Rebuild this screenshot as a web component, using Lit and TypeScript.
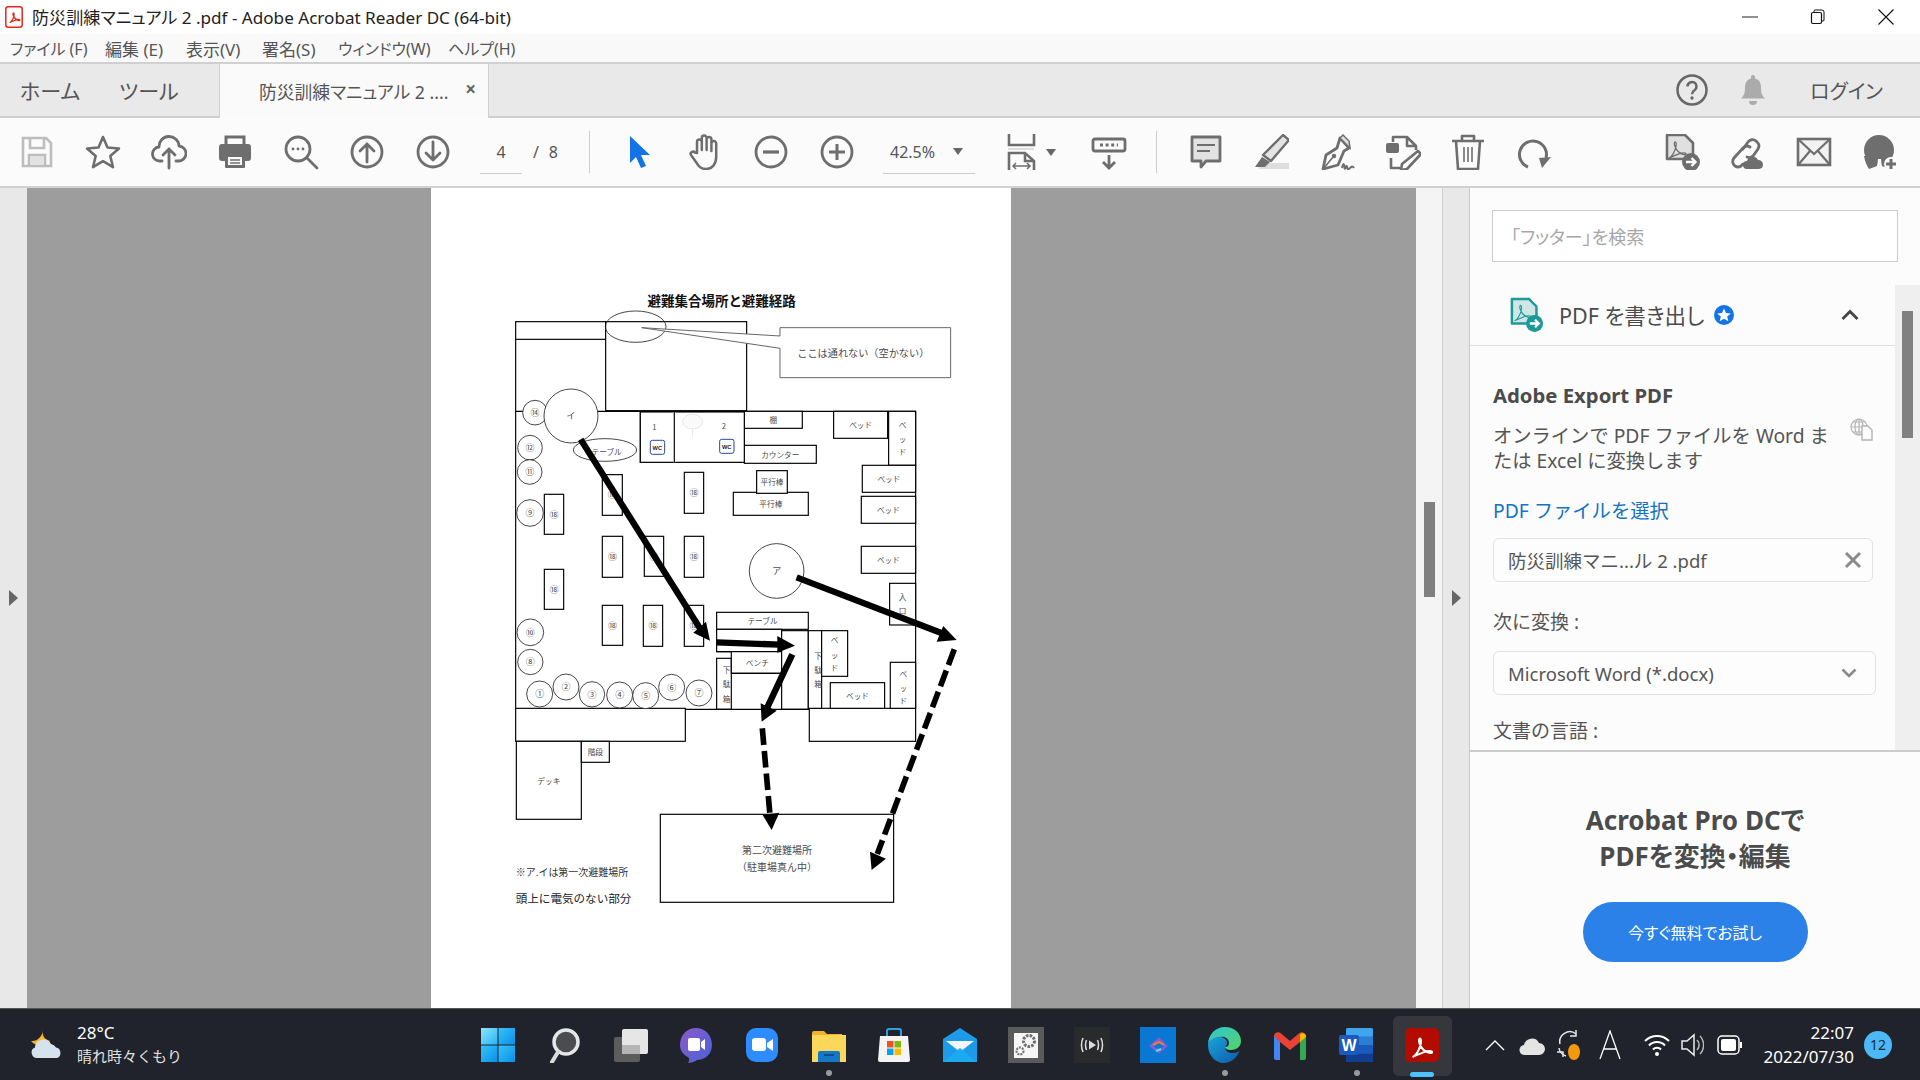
import { LitElement, html, css, svg, nothing } from "lit";
import { customElement } from "lit/decorators.js";

const G = "#6e6e6e";
const swirl = (c: string, w = 1.6) => svg`<path fill="none" stroke=${c} stroke-width=${w} stroke-linejoin="round" d="M5 27c3-1 7-8 8-14 .4-3 0-5-1-5s-1.6 3 0 6c2 5 6 8 10 9 2 .4 3.4-.3 2.6-1.3-1-1-5-.6-9 .8-5 2-9.6 4-10.6 4.500z"/>`;

const icons: Record<string, unknown> = {
  save: svg`<g fill="none" stroke="#bdbdbd" stroke-width="2.6"><path d="M4 4h23l5 5v23H4z"/><path d="M11 4v10h14V4M10 32V21h16v11"/></g><rect x="11" y="22" width="14" height="9" fill="#e2e2e2"/>`,
  star: svg`<polygon points="18,3 22.500,13.500 34,14.500 25.300,22 28,33.200 18,27.200 8,33.200 10.700,22 2,14.500 13.500,13.500" fill="none" stroke=${G} stroke-width="2.6" stroke-linejoin="round"/>`,
  upload: svg`<g fill="none" stroke=${G} stroke-width="2.8" stroke-linecap="round" stroke-linejoin="round"><path d="M11 27H9a7 7 0 0 1-1-14 10 10 0 0 1 20-1 7.500 7.500 0 0 1-1 15h-2"/><path d="M18 34V15M12 21l6-6 6 6"/></g>`,
  print: svg`<path d="M9 10V3h18v7" fill="none" stroke=${G} stroke-width="3"/><rect x="2" y="10" width="32" height="17" rx="3" fill=${G}/><path d="M8 20h20v13a1 1 0 0 1-1 1H9a1 1 0 0 1-1-1z" fill=${G}/><rect x="11" y="23" width="14" height="8" fill="#fafafa"/><path d="M13 26h10M13 29h10" stroke=${G} stroke-width="1.400"/>`,
  find: svg`<g fill="none" stroke=${G} stroke-width="2.8" stroke-linecap="round"><circle cx="15" cy="15" r="12"/><path d="M24 24l10 10"/></g><g fill=${G}><circle cx="10" cy="15" r="1.400"/><circle cx="15" cy="15" r="1.400"/><circle cx="20" cy="15" r="1.400"/></g>`,
  up: svg`<g fill="none" stroke=${G} stroke-width="2.800" stroke-linecap="round" stroke-linejoin="round"><circle cx="18" cy="18" r="15"/><path d="M18 28V10M11 17l7-7 7 7"/></g>`,
  down: svg`<g fill="none" stroke=${G} stroke-width="2.800" stroke-linecap="round" stroke-linejoin="round"><circle cx="18" cy="18" r="15"/><path d="M18 8v18M11 19l7 7 7-7"/></g>`,
  cursor: svg`<path d="M9 2v27l6-6 5 11 5-2-5-11h9z" fill="#1473e6"/>`,
  hand: svg`<path d="M10 19V8a2.400 2.400 0 0 1 4.800 0v8V4a2.400 2.400 0 0 1 4.800 0v12V5.500a2.400 2.400 0 0 1 4.800 0V17V9.500a2.400 2.400 0 0 1 4.800 0V23c0 7-4 12-10 12-4.500 0-7.500-2-9.500-6L4 21c-1.500-2.500 2-4.500 4-2.500z" fill="none" stroke=${G} stroke-width="2.500" stroke-linejoin="round"/>`,
  minus: svg`<g fill="none" stroke=${G} stroke-width="2.800"><circle cx="18" cy="18" r="15"/><path d="M10 18h16" stroke-width="3.200"/></g>`,
  plus: svg`<g fill="none" stroke=${G} stroke-width="2.800"><circle cx="18" cy="18" r="15"/><path d="M10 18h16M18 10v16" stroke-width="3"/></g>`,
  fit: svg`<g fill="none" stroke=${G} stroke-width="2.600"><path d="M5 0v11h25V0"/><path d="M5 36V19h16l9 8v9"/><path d="M21 19v8h9"/><path d="M9 32h17M12 29l-3 3 3 3M23 29l3 3-3 3" stroke-width="1.500"/></g><rect x="4" y="14" width="26" height="2" fill="#ddd"/>`,
  measure: svg`<g fill="none" stroke=${G}><rect x="2" y="5" width="32" height="12" rx="2" stroke-width="2.800"/><path d="M18 21v13M12 28l6 6 6-6" stroke-width="2.800"/><path d="M9 11h18" stroke-width="3" stroke-dasharray="3 2.600"/></g>`,
  comment: svg`<path d="M4 3h28v24H18l-5 6v-6H4z" fill="#e2e2e2" stroke=${G} stroke-width="2.800" stroke-linejoin="round"/><path d="M9 11h18M9 17h13" stroke=${G} stroke-width="1.800"/>`,
  highlight: svg`<rect x="6" y="29" width="30" height="6" fill="#dedede"/><path d="M30 1l6 5-18 21-8-6z" fill="#e4e4e4" stroke=${G} stroke-width="2.400" stroke-linejoin="round"/><path d="M9 23l-7 10h10l5-5z" fill=${G}/>`,
  sign: svg`<path d="M21 4l9 10-5 3-6 14-15 4 3-14 11-7z" fill="none" stroke=${G} stroke-width="2.800" stroke-linejoin="round"/><path d="M21 4l3-3 6 6 1 7z" fill="#e0e0e0" stroke=${G} stroke-width="1.500"/><path d="M5 34l9-11" stroke=${G} stroke-width="1.600"/><circle cx="15" cy="22" r="2.200" fill=${G}/><path d="M23 34c1-5 2-5 2.500-.5s1.500-4.500 2.500-.5 1.500 2 3 1 2-3 4 0" fill="none" stroke=${G} stroke-width="2"/>`,
  edit: svg`<g fill="none" stroke=${G} stroke-width="2.600" stroke-linejoin="round"><path d="M8 8V3h14l9 9v4M22 3v9h9M6 24v10h9"/><path d="M33 17l3 3-14 15-6 1 1-6z"/></g><rect x="1" y="9" width="13" height="10" rx="2" fill=${G}/>`,
  trash: svg`<g fill="none" stroke=${G} stroke-width="2.600" stroke-linejoin="round"><path d="M2 7h32M12 7V2h12v5M6 7l2 28h20l2-28"/><path d="M14 13v15M18 13v15M22 13v15" stroke-width="1.600"/></g>`,
  rotate: svg`<path d="M12 33A13.500 13.500 0 1 1 30 24" fill="none" stroke=${G} stroke-width="3"/><polygon points="23,24 35,23 26,34" fill=${G}/>`,
  exportDoc: svg`<path d="M3 1h18l8 8v16H3z" fill="#e0e0e0" stroke=${G} stroke-width="2.600" stroke-linejoin="round"/><g transform="translate(1 1) scale(.85)">${swirl(G, 1.5)}</g><circle cx="27" cy="28" r="9" fill=${G}/><path d="M22 28h9M27.500 24l4 4-4 4" fill="none" stroke="#fff" stroke-width="2.400"/>`,
  link: svg`<g transform="translate(-2 0)"><g fill="none" stroke=${G} stroke-width="2.800" stroke-linecap="round"><path d="M15 15l5-7a5.500 5.500 0 0 1 8-1l1 1a5.500 5.500 0 0 1 1 7l-5 7a5.500 5.500 0 0 1-6 1"/><path d="M22 13a5.500 5.500 0 0 0-7 1l-9 10a5.500 5.500 0 0 0 1 8 5.500 5.500 0 0 0 7-1l1-1"/></g><path d="M19 35a4 4 0 0 1 0-8 6 6 0 0 1 11-1 4.500 4.500 0 0 1 5 4.500A4.500 4.500 0 0 1 31 35z" fill=${G}/></g>`,
  mail: svg`<rect x="2" y="5" width="32" height="26" fill="#f2f2f2" stroke=${G} stroke-width="2.600"/><path d="M2 5l16 15L34 5M2 31l12-14M34 31L22 17" fill="none" stroke=${G} stroke-width="2.200"/>`,
  user: svg`<circle cx="17" cy="16" r="15" fill=${G}/><path d="M2 22c1 6 3 10 5 13l8-3 1-6h3l1 6 7 3 3-13z" fill=${G}/><path d="M15 34l1-9h3l1 9z" fill="#fbfbfb"/><circle cx="29" cy="30" r="7" fill="#fbfbfb"/><path d="M29 25v10M24 30h10" stroke=${G} stroke-width="3"/>`,
};

const tool = (name: string, size = 36) =>
  html`<svg class="ico" width=${size} height=${size} viewBox="0 0 36 36">${icons[name]}</svg>`;

/* ---- floor plan: coordinates are in a 3x grid laid over the page ---- */
type R = [number, number, number, number, string?];
const rectsA: R[] = [
  [77, 125, 347, 178], [347, 125, 770, 392], [451, 396, 553, 547], [553, 396, 763, 547],
  [763, 394, 937, 445, "棚"], [763, 496, 979, 550, "カウンター"], [1031, 394, 1193, 475, "ベッド"],
  [1196, 394, 1277, 556], [1117, 556, 1277, 637, "ベッド"], [1114, 649, 1277, 730, "ベッド"],
  [1114, 799, 1277, 880, "ベッド"], [730, 637, 955, 706, "平行棒"], [800, 572, 892, 640, "平行棒"],
  [163, 643, 221, 763, "⑱"], [337, 584, 397, 706, "⑱"], [583, 577, 641, 700, "⑱"],
  [337, 769, 398, 892, "⑱"], [463, 769, 521, 889, "⑱"], [583, 769, 641, 892, "⑱"],
];
const rectsB: R[] = [
  [163, -2, 221, 118, "⑱"], [337, 106, 398, 226, "⑱"], [460, 106, 518, 229, "⑱"], [583, 106, 641, 229, "⑱"],
  [77, 415, 586, 514], [958, 415, 1277, 514], [79, 514, 274, 748, "デッキ"], [274, 514, 358, 577, "階段"],
  [680, 127, 955, 178, "テーブル"], [680, 178, 875, 245], [680, 265, 724, 418], [724, 245, 880, 310, "ベンチ"],
  [875, 182, 955, 418], [955, 182, 995, 415], [995, 182, 1073, 319], [1021, 338, 1184, 415, "ベッド"],
  [1199, 40, 1277, 165], [1201, 277, 1277, 415], [511, 733, 1211, 997],
];
const circlesA: [number, number, number, string][] = [
  [135, 398, 37, "⑭"], [120, 503, 37, "⑫"], [119, 576, 37, "⑪"], [120, 699, 40, "⑨"],
  [243, 408, 81, "イ"], [860, 873, 82, "ア"],
];
const circlesB: [number, number, number, string][] = [
  [121, 187, 40, "⑩"], [121, 276, 38, "⑧"], [149, 372, 39, "①"], [228, 351, 39, "②"], [306, 373, 38, "③"],
  [389, 375, 39, "④"], [467, 377, 39, "⑤"], [545, 352, 39, "⑥"], [627, 369, 39, "⑦"],
];
const vertical: [number, number, string][] = [
  [1238, 432 - 870, "ベ"], [1238, 476 - 870, "ッ"], [1238, 515 - 870, "ド"],
  [710, 298, "下"], [710, 342, "駄"], [710, 385, "箱"], [984, 258, "下"], [984, 300, "駄"], [984, 342, "箱"],
  [1034, 208, "ベ"], [1034, 253, "ッ"], [1034, 293, "ド"], [1238, 80, "入"], [1238, 122, "口"],
  [1240, 310, "ベ"], [1240, 352, "ッ"], [1240, 392, "ド"], [493, 440 - 870, "1"], [702, 437 - 870, "2"],
];
const rectSvg = (r: R) => svg`<rect class="wall" x=${r[0]} y=${r[1]} width=${r[2] - r[0]} height=${r[3] - r[1]}/>${r[4] ? svg`<text class="lb ${r[4] === "⑱" ? "num" : ""}" x=${(r[0] + r[2]) / 2} y=${(r[1] + r[3]) / 2}>${r[4]}</text>` : nothing}`;
const circleSvg = (c: [number, number, number, string]) => svg`<circle class="round" cx=${c[0]} cy=${c[1]} r=${c[2]}/><text class="lb num" x=${c[0]} y=${c[1]}>${c[3]}</text>`;

const plan = () => html`
<svg class="plan" width="580" height="820" viewBox="431 188 580 820">
  <g transform="translate(490 280) scale(.3333)">
    <text class="ttl" x="695" y="60">避難集合場所と避難経路</text>
    <path class="line" d="M77 178V1285M77 394H1277V1285"/>
    ${rectsA.map(rectSvg)}
    <rect class="wall" x="451" y="396" width="312" height="151"/>
    <path class="blank" d="M665 404V530M553 396V547"/>
    <path class="line" d="M553 396V547"/>
    <ellipse class="round nofill" cx="437" cy="140" rx="91" ry="47"/>
    <path class="callout" d="M870 143H1382V293H870V205L455 143 870 168z"/>
    <text class="lb big" x="1120" y="217">ここは通れない（空かない）</text>
    <ellipse class="round" cx="345" cy="510" rx="95" ry="34"/>
    <text class="lb" x="350" y="516">テーブル</text>
    <g class="sink"><ellipse cx="608" cy="425" rx="30" ry="22"/><path d="M608 447V470"/></g>
    <rect class="wc" x="481" y="481" width="43" height="42" rx="6"/><text class="wct" x="502" y="503">WC</text>
    <rect class="wc" x="689" y="478" width="43" height="42" rx="6"/><text class="wct" x="710" y="500">WC</text>
    ${circlesA.map(circleSvg)}
  </g>
  <g transform="translate(490 570) scale(.3333)">
    ${rectsB.map(rectSvg)}
    <path class="line" d="M586 418H958M680 245H724M724 310H875"/>
    ${circlesB.map(circleSvg)}
    ${vertical.map((v) => svg`<text class="lb" x=${v[0]} y=${v[1]}>${v[2]}</text>`)}
    <text class="lb mid" x="861" y="838">第二次避難場所</text>
    <text class="lb mid" x="861" y="891">（駐車場真ん中）</text>
    <text class="note" x="77" y="904">※ア.イは第一次避難場所</text>
    <text class="note strong" x="77" y="983">頭上に電気のない部分</text>
    <g class="arrow">
      <path d="M272 -392L632 178"/><polygon points="648,155 660,212 610,188"/>
      <path d="M680 217L870 224"/><polygon points="862,198 915,227 862,248"/>
      <path d="M907 253L832 412"/><polygon points="812,400 815,455 860,422"/>
      <path d="M920 22L1362 192"/><polygon points="1360,168 1400,210 1340,215"/>
      <path class="dash" d="M817 475L840 735"/><polygon points="818,735 868,728 845,780"/>
      <path class="dash" d="M1393 238L1162 852"/><polygon points="1140,845 1188,866 1145,900"/>
    </g>
  </g>
</svg>`;

/* ---- taskbar glyphs ---- */
const task = [
  svg`<defs><linearGradient id="w1" x1="0" y1="0" x2="1" y2="1"><stop offset="0" stop-color="#8fe3fb"/><stop offset="1" stop-color="#25b5f5"/></linearGradient><linearGradient id="w2" x1="0" y1="0" x2="1" y2="1"><stop offset="0" stop-color="#35c3fa"/><stop offset="1" stop-color="#0a8fe8"/></linearGradient></defs><rect x="1" y="1" width="16.500" height="16.500" fill="url(#w1)"/><rect x="18.500" y="1" width="16.500" height="16.500" fill="url(#w2)"/><rect x="1" y="18.500" width="16.500" height="16.500" fill="url(#w2)"/><rect x="18.500" y="18.500" width="16.500" height="16.500" fill="url(#w2)"/>`,
  svg`<circle cx="20" cy="15" r="12" fill="#4a4c50" stroke="#e4e6e8" stroke-width="3.500"/><path d="M12 25L6 35" stroke="#d8dadc" stroke-width="4" stroke-linecap="round"/>`,
  svg`<rect x="2" y="10" width="26" height="25" rx="2" fill="#5c5c5c"/><rect x="10" y="2" width="26" height="25" rx="2" fill="#e6e6e6"/><rect x="10" y="18" width="18" height="9" fill="#b5b5b5"/>`,
  svg`<defs><linearGradient id="c1" x1="0" y1="0" x2="1" y2="1"><stop offset="0" stop-color="#8a5bc9"/><stop offset="1" stop-color="#4a62d8"/></linearGradient></defs><path d="M18 1c9 0 16 7 16 17s-8 15-15 15c-2 2-7 3-9 3 1-1 1.500-3 1-5C6 28 2 24 2 18 2 8 9 1 18 1z" fill="url(#c1)"/><rect x="10" y="11" width="12" height="13" rx="2" fill="#fff"/><path d="M23 15l4-3v11l-4-3z" fill="#fff"/>`,
  svg`<rect x="2" y="1" width="32" height="34" rx="10" fill="#2d8cff"/><rect x="8" y="11" width="14" height="13" rx="3" fill="#fff"/><path d="M23 16l6-4v12l-6-4z" fill="#fff"/>`,
  svg`<path d="M2 6a2 2 0 0 1 2-2h10l3 3h15v28H2z" fill="#f3b12c"/><rect x="2" y="8" width="34" height="27" fill="#fbd75b"/><path d="M8 35V26a2 2 0 0 1 2-2h18a2 2 0 0 1 2 2v9z" fill="#1478c8"/><rect x="14" y="27" width="10" height="2" fill="#0c4f8e"/>`,
  svg`<path d="M4 9h28l2 24a2 2 0 0 1-2 2H4a2 2 0 0 1-2-2z" fill="#f4f4f4"/><path d="M11 9V4a2 2 0 0 1 2-2h10a2 2 0 0 1 2 2v5" fill="none" stroke="#2f9fe8" stroke-width="2"/><rect x="11" y="14" width="6.500" height="6.500" fill="#f25022"/><rect x="18.500" y="14" width="6.500" height="6.500" fill="#7fba00"/><rect x="11" y="21.500" width="6.500" height="6.500" fill="#00a4ef"/><rect x="18.500" y="21.500" width="6.500" height="6.500" fill="#ffb900"/>`,
  svg`<path d="M1 12L18 1l17 11v23H1z" fill="#1b9be8"/><path d="M4 14h28L18 25z" fill="#f2f8fd"/><path d="M1 35l17-14 17 14z" fill="#1ba9f0"/>`,
  svg`<rect x="0" y="0" width="36" height="36" fill="#5a5a5a"/><rect x="6" y="6" width="24" height="25" fill="#f6f6f6"/><circle cx="21" cy="14" r="5.500" fill="none" stroke="#6e6e6e" stroke-width="3" stroke-dasharray="2.500 1.200"/><circle cx="12" cy="24" r="3.500" fill="none" stroke="#777" stroke-width="2.200" stroke-dasharray="2 1"/>`,
  svg`<rect x="0" y="0" width="36" height="36" fill="#292a2c"/><g fill="none" stroke="#ddd" stroke-width="1.500"><path d="M9 11q-3 7 0 14M12.500 13q-2 5 0 10M27 11q3 7 0 14M23.500 13q2 5 0 10"/></g><polygon points="15,13.500 22,18 15,22.500" fill="#ddd"/>`,
  svg`<rect x="0" y="0" width="36" height="36" fill="#0a78d2"/><path d="M11 19l8-7 7 7-7 6z" fill="none" stroke="#8a5ad8" stroke-width="2.500"/><path d="M13 18l6-3 5 3" fill="none" stroke="#ef7d2f" stroke-width="2"/><path d="M16 24l5-2" stroke="#5ce0e6" stroke-width="2"/>`,
  svg`<defs><linearGradient id="e1" x1="0" y1="0" x2="1" y2="1"><stop offset="0" stop-color="#2fc6d4"/><stop offset="1" stop-color="#55d267"/></linearGradient><linearGradient id="e2" x1="0" y1="0" x2="1" y2="1"><stop offset="0" stop-color="#1aa3de"/><stop offset="1" stop-color="#0d5aa6"/></linearGradient></defs><path d="M2 18C2 8 9 0 19 0c9 0 16 6 16 14 0 6-5 9-10 9-3 0-6-1-6-3 2 0 4-1 4-4 0-4-4-7-9-6C8 11 2 14 2 18z" fill="url(#e1)"/><path d="M2 18c0-5 6-8 12-8 4 0 7 2.500 7 6 0 1-.5 3-2 4 0 5 5 6 8 6 3 0 6-1 7-3-3 8-9 13-16 13C9 36 2 28 2 18z" fill="url(#e2)"/>`,
  svg`<path d="M2 33V8l6-1v26H4a2 2 0 0 1-2-2z" fill="#4285f4"/><path d="M34 33V8l-6-1v26h4a2 2 0 0 0 2-2z" fill="#34a853"/><path d="M2 9c0-3 4-5 6.500-3L18 14l9.500-8c2.500-2 6.500 0 6.500 3L28 15l-10 8-10-8z" fill="#ea4335"/><path d="M28 7v8l6-5c0-3-3-5-6-3z" fill="#fbbc04"/>`,
  svg`<rect x="8" y="1" width="27" height="34" rx="2" fill="#2b7cd3"/><rect x="8" y="1" width="27" height="8.500" rx="2" fill="#41a5ee"/><rect x="8" y="18" width="27" height="8.500" fill="#185abd"/><path d="M8 26.500h27V33a2 2 0 0 1-2 2H10a2 2 0 0 1-2-2z" fill="#103f91"/><rect x="1" y="8" width="20" height="20" rx="2" fill="#185abd"/><text class="wordw" x="11" y="18">W</text>`,
  svg`<rect x="1" y="1" width="34" height="34" rx="5" fill="#b30b00"/><g transform="translate(4.500 4) scale(.95)">${swirl("#fff", 2.200)}</g>`,
];

@customElement("app-root")
export class AppRoot extends LitElement {
  static styles = css`
    :host {
      display: flex; flex-direction: column; width: 1920px; height: 1080px; overflow: hidden;
      font-family: "Noto Sans", "Noto Sans CJK JP", sans-serif; color: #555;
      font-feature-settings: "palt"; background: #e8e8e8;
    }
    svg { display: block; flex: none; }
    .titlebar { height: 34px; background: #fff; display: flex; align-items: center; color: #222; font-size: 17.100px; flex: none; padding-bottom: 1px; box-sizing: border-box; }
    .app-ico { margin: 0 9px 0 5px; }
    .title { flex: 1; }
    .winbtn { width: 68px; display: flex; justify-content: center; }
    .menubar { height: 30px; box-sizing: border-box; background: #f9f9f9; border-bottom: 2px solid #d0d0d0; display: flex; align-items: center; padding-left: 10px; font-size: 16px; flex: none; }
    .menubar span { flex: none; }
    .menubar .m1 { width: 95px; }
    .menubar .m2 { width: 81px; font-size: 17px; }
    .menubar .m3, .menubar .m4 { width: 76px; font-size: 17px; }
    .menubar .m5 { width: 110px; }
    .tabs { height: 54px; box-sizing: border-box; background: #e9e9e9; border-bottom: 2px solid #cfcfcf; display: flex; align-items: stretch; flex: none; font-size: 21px; }
    .tlink { display: flex; align-items: center; padding-left: 20px; width: 99px; box-sizing: border-box; }
    .tlink.second { width: 120px; }
    .tab { width: 270px; margin-bottom: -2px; background: #fafafa; border-left: 1px solid #cfcfcf; border-right: 1px solid #cfcfcf; display: flex; align-items: center; padding-left: 39px; box-sizing: border-box; font-size: 17.800px; position: relative; }
    .tab .x { position: absolute; right: 12px; font-size: 19px; font-weight: 700; color: #666; top: 12px; }
    .tabs .spacer { flex: 1; }
    .help { margin-right: 32px; align-self: center; }
    .bell { margin-right: 44px; align-self: center; }
    .login { align-self: center; margin-right: 37px; font-size: 20px; }
    .toolbar { height: 70px; background: #fbfbfb; border-bottom: 2px solid #d0d0d0; box-sizing: border-box; display: flex; align-items: center; padding-left: 4px; flex: none; }
    .tb { width: 66px; display: flex; justify-content: center; flex: none; }
    .pager { display: flex; align-items: center; width: 123px; flex: none; font-size: 16px; }
    .pageinput { margin-left: 14px; width: 42px; height: 43px; border-bottom: 1px solid #ccc; display: flex; align-items: center; justify-content: center; flex: none; }
    .slash { margin-left: 11px; letter-spacing: .5px; }
    .sep { width: 1px; height: 42px; background: #ccc; flex: none; }
    .sep.after { margin-left: 14px; }
    .pad16 { width: 16px; flex: none; }
    .tools-b .tb { width: 65.600px; }
    .tools-b { display: flex; flex: none; }
    .zoombox { width: 92px; margin-left: 13px; height: 43px; border-bottom: 1px solid #ccc; display: flex; align-items: center; flex: none; font-size: 16px; padding-left: 7px; box-sizing: border-box; }
    .zoombox span { flex: 1; }
    .caret { width: 0; height: 0; border: 5px solid transparent; border-top: 7px solid #666; border-bottom: 0; }
    .zoombox .caret { margin-right: 12px; }
    .fitbtn { width: 86px; margin-left: 29px; display: flex; align-items: center; gap: 6px; flex: none; }
    .meas { margin-left: -14px; }
    .grow { flex: 1; }
    .end { margin-right: 7px; }
    .main { flex: 1; display: flex; min-height: 0; }
    .gutter { width: 27px; background: #e8e8e8; display: flex; align-items: center; flex: none; box-sizing: border-box; justify-content: center; }
    .tri { width: 0; height: 0; border: 8px solid transparent; border-left: 9px solid #666; border-right: 0; }
    .doc { width: 1389px; background: #9d9d9d; overflow: hidden; display: flex; justify-content: flex-start; flex: none; }
    .page { margin-left: 404px; width: 580px; background: #fff; flex: none; }
    .vscroll { width: 26px; background: #f4f4f4; flex: none; position: relative; }
    .thumb { position: absolute; background: #808080; }
    .vscroll .thumb { left: 8px; width: 11px; top: 314px; height: 95px; }
    .gutter.rt { width: 28px; border-left: 1px solid #cfcfcf; border-right: 1px solid #c8c8c8; }
    .side { flex: 1; background: #fcfcfc; display: flex; flex-direction: column; min-width: 0; }
    .search { padding: 22px 22px 23px; flex: none; }
    .searchbox { height: 52px; box-sizing: border-box; border: 1px solid #ccc; background: #fff; color: #a6a6a6; font-size: 18px; display: flex; align-items: center; padding-left: 18px; }
    .panel { flex: 1; min-height: 0; overflow: hidden; position: relative; padding-right: 25px; }
    .track { position: absolute; right: 0; top: 0; bottom: 0; width: 25px; background: #efefef; }
    .track .thumb { left: 7px; width: 11px; top: 26px; height: 127px; }
    .phead { height: 60px; border-bottom: 1px solid #ddd; display: flex; align-items: center; padding-left: 40px; font-size: 21.500px; color: #4b4b4b; }
    .phead .lab { margin-left: 15px; margin-top: -1px; }
    .badge { margin-left: 10px; }
    .phead .chev { margin-left: auto; margin-right: 36px; }
    .pbody { padding: 0 0 0 23px; position: relative; font-feature-settings: "palt" 0; }
    h3 { margin: 36px 0 0; font-size: 20.300px; line-height: 26px; font-weight: 700; color: #4b4b4b; display: flex; align-items: center; }
    h3 .glob { position: absolute; left: 380px; top: 36px; }
    .desc { margin: 16px 0 0; font-size: 19.300px; line-height: 24.500px; color: #555; width: 350px; white-space: nowrap; }
    .pick { margin-top: 25px; color: #1272c4; font-size: 19.300px; line-height: 25px; }
    .box { height: 44px; margin-top: 15px; border: 1px solid #e2e2e2; border-radius: 6px; background: #fdfdfd; display: flex; align-items: center; padding: 0 14px; box-sizing: border-box; font-size: 18.500px; justify-content: space-between; }
    .box.f { width: 380px; padding-right: 10px; }
    .box.s { width: 383px; padding-right: 18px; }
    .lbl { font-size: 19px; line-height: 25px; margin-top: 28px; }
    .lbl.last { margin-top: 24px; }
    .lbl + .box { margin-top: 16px; }
    .promo { height: 258px; border-top: 2px solid #ccc; box-sizing: border-box; display: flex; flex-direction: column; align-items: center; flex: none; padding-top: 50px; }
    .promo b { font-size: 26px; line-height: 36px; color: #4b4b4b; text-align: center; font-weight: 700; }
    .cta { margin-top: 28px; width: 225px; height: 60px; border-radius: 30px; background: #2c81e8; color: #fff; font-size: 16px; display: flex; align-items: center; justify-content: center; }
    .taskbar { height: 72px; background: #20232b; border-top: 1px solid #555; box-sizing: border-box; display: flex; align-items: center; color: #fff; flex: none; }
    .weather { width: 465px; display: flex; align-items: center; padding-left: 28px; box-sizing: border-box; flex: none; }
    .wtext { margin-left: 13px; font-size: 15px; line-height: 23px; color: #e0e0e0; font-feature-settings: "palt" 0; }
    .wtext b { font-size: 17px; font-weight: 400; color: #fff; }
    .tile { width: 66px; display: flex; justify-content: center; position: relative; flex: none; }
    .tile .dot { position: absolute; top: 43px; left: 31px; width: 6px; height: 6px; border-radius: 3px; background: #9a9a9a; }
    .tile.on { align-self: stretch; align-items: center; }
    .tile.on .plate { position: absolute; left: 4px; right: 3px; top: 7px; bottom: 4px; background: #35373d; border-radius: 6px; }
    .tile.on svg { position: relative; }
    .tile.on .bar { position: absolute; left: 21px; bottom: 3px; width: 24px; height: 5px; border-radius: 2.500px; background: #4cc2ff; }
    .tray { display: flex; align-items: center; flex: 1; padding-left: 30px; }
    .tr1 { margin-right: 14px; }
    .tr2 { margin-right: 11px; }
    .tr3 { margin-right: 17px; }
    .tr4 { margin-right: 23px; }
    .tr5 { margin-right: 10px; }
    .tr6 { margin-right: 13px; }
    .clock { margin-left: auto; text-align: right; font-size: 17px; line-height: 24px; margin-right: 10px; }
    .count { width: 28px; height: 28px; border-radius: 14px; background: #4cb8f5; color: #1a2a38; font-size: 14px; display: flex; align-items: center; justify-content: center; margin-right: 28px; }
    .wall { fill: #fff; stroke: #000; stroke-width: 3.500; }
    .line { fill: none; stroke: #000; stroke-width: 3.500; }
    .blank { stroke: #fff; stroke-width: 6; fill: none; }
    .round { fill: #fff; stroke: #222; stroke-width: 2.500; }
    .nofill { fill: none; }
    .callout { fill: #fff; stroke: #666; stroke-width: 3; stroke-linejoin: miter; }
    .plan text { font-family: "Noto Sans CJK JP", sans-serif; text-anchor: middle; dominant-baseline: central; font-feature-settings: "palt" 0; }
    .lb { font-size: 23px; fill: #4a4a4a; }
    .lb.num { font-size: 27px; }
    .lb.big { font-size: 30.500px; }
    .lb.mid { font-size: 30px; }
    .plan .ttl { font-size: 40.500px; font-weight: 700; fill: #111; }
    .plan .note { font-size: 30px; fill: #333; text-anchor: start; }
    .plan .note.strong { font-size: 34.800px; fill: #222; }
    .sink { fill: #fafafa; stroke: #ddd; stroke-width: 2; }
    .wc { fill: #fff; stroke: #274a96; stroke-width: 3; }
    .plan .wct { font-family: "Liberation Sans", sans-serif; font-size: 17px; font-weight: 700; fill: #222; }
    .arrow path { stroke: #000; stroke-width: 19; fill: none; }
    .arrow path.dash { stroke-width: 17; stroke-dasharray: 50 18; }
    .arrow polygon { fill: #000; }
    .wordw { font-family: "Liberation Sans", sans-serif; font-size: 16px; font-weight: 700; fill: #fff; text-anchor: middle; dominant-baseline: central; }
  `;

  render() {
    return html`
      <div class="titlebar">
        <svg class="app-ico" width="18" height="22" viewBox="0 0 18 22"><rect x=".8" y=".8" width="16.400" height="20.400" rx="2.500" fill="#fff" stroke="#e8271c" stroke-width="1.500"/><g transform="translate(2.500 3) scale(.5)">${swirl("#e8271c", 2.600)}</g></svg>
        <span class="title">防災訓練マニュアル 2 .pdf - Adobe Acrobat Reader DC (64-bit)</span>
        <span class="winbtn"><svg width="16" height="16" viewBox="0 0 16 16"><path d="M0 8h16" stroke="#222"/></svg></span>
        <span class="winbtn"><svg width="16" height="16" viewBox="0 0 16 16"><rect x="1.500" y="3.500" width="10" height="11" rx="1.500" fill="none" stroke="#111" stroke-width="1.200"/><path d="M4 3V2a1 1 0 0 1 1-1h7a2 2 0 0 1 2 2v8a1 1 0 0 1-1 1h-1" fill="none" stroke="#111"/></svg></span>
        <span class="winbtn"><svg width="16" height="16" viewBox="0 0 16 16"><path d="M.5.5l15 15M15.500.5l-15 15" stroke="#111" stroke-width="1.100"/></svg></span>
      </div>
      <div class="menubar">
        <span class="m1">ファイル (F)</span><span class="m2">編集 (E)</span><span class="m3">表示(V)</span><span class="m4">署名(S)</span><span class="m5">ウィンドウ(W)</span><span>ヘルプ(H)</span>
      </div>
      <div class="tabs">
        <div class="tlink">ホーム</div><div class="tlink second">ツール</div>
        <div class="tab">防災訓練マニュアル 2 ....<span class="x">×</span></div>
        <div class="spacer"></div>
        <svg class="help" width="32" height="32" viewBox="0 0 32 32"><circle cx="16" cy="16" r="14.500" fill="none" stroke="#666" stroke-width="2.500"/><path d="M11.500 12.500a4.500 4.500 0 1 1 7 3.700c-1.700 1.100-2.500 2-2.500 4" fill="none" stroke="#666" stroke-width="2.500"/><circle cx="16" cy="24" r="1.700" fill="#666"/></svg>
        <svg class="bell" width="26" height="32" viewBox="0 0 26 32"><path d="M13 1a2 2 0 0 1 2 2v1.500c4 1 6 4 6 9 0 6 1 8 4 11H1c3-3 4-5 4-11 0-5 2-8 6-9V3a2 2 0 0 1 2-2z" fill="#ababab"/><path d="M9 27h8a4 4 0 0 1-8 0z" fill="#ababab"/></svg>
        <span class="login">ログイン</span>
      </div>
      <div class="toolbar">
        ${["save", "star", "upload", "print", "find", "up", "down"].map((n) => html`<span class="tb">${tool(n)}</span>`)}
        <div class="pager"><div class="pageinput">4</div><span class="slash">/&nbsp;&nbsp;8</span></div>
        <div class="sep"></div><div class="pad16"></div>
        ${["cursor", "hand", "minus", "plus"].map((n) => html`<span class="tb">${tool(n)}</span>`)}
        <div class="zoombox"><span>42.5%</span><i class="caret"></i></div>
        <div class="fitbtn">${tool("fit")}<i class="caret"></i></div>
        <span class="tb meas">${tool("measure")}</span>
        <div class="sep after"></div><div class="pad16"></div>
        <div class="tools-b">${["comment", "highlight", "sign", "edit", "trash", "rotate"].map((n) => html`<span class="tb">${tool(n)}</span>`)}</div>
        <div class="grow"></div>
        ${["exportDoc", "link", "mail", "user"].map((n, i) => html`<span class="tb ${i === 3 ? "end" : ""}">${tool(n)}</span>`)}
      </div>
      <div class="main">
        <div class="gutter"><i class="tri"></i></div>
        <div class="doc"><div class="page">${plan()}</div></div>
        <div class="vscroll"><div class="thumb"></div></div>
        <div class="gutter rt"><i class="tri"></i></div>
        <div class="side">
          <div class="search"><div class="searchbox">「フッター」を検索</div></div>
          <div class="panel">
            <div class="track"><div class="thumb"></div></div>
            <div class="phead">
              <svg width="34" height="36" viewBox="0 0 36 36"><path d="M2 1h18l8 8v18H2z" fill="#cfe6e6" stroke="#1d9a96" stroke-width="2.600" stroke-linejoin="round"/><g transform="translate(1 1) scale(.85)">${swirl("#1d9a96", 1.400)}</g><circle cx="26" cy="27" r="9" fill="#1d9a96"/><path d="M21 27h9M26.500 23l4 4-4 4" fill="none" stroke="#fff" stroke-width="2.400"/></svg>
              <span class="lab">PDF を書き出し</span>
              <svg class="badge" width="20" height="20" viewBox="0 0 20 20"><circle cx="10" cy="10" r="10" fill="#1473e6"/><polygon points="10,3.500 12,8 16.800,8.400 13.200,11.500 14.300,16.200 10,13.700 5.700,16.200 6.800,11.500 3.200,8.400 8,8" fill="#fff"/></svg>
              <svg class="chev" width="18" height="12" viewBox="0 0 18 12"><path d="M1.500 10L9 2.500 16.500 10" fill="none" stroke="#444" stroke-width="2.800"/></svg>
            </div>
            <div class="pbody">
              <h3>Adobe Export PDF
                <svg class="glob" width="24" height="24" viewBox="0 0 24 24"><g fill="none" stroke="#b4b4b4" stroke-width="1.200"><circle cx="9" cy="9" r="8"/><path d="M1 9h16M9 1v16M3 4h12M3 14h12"/><ellipse cx="9" cy="9" rx="4" ry="8"/></g><path d="M12 8h6l4 4v10H12z" fill="#fcfcfc" stroke="#b4b4b4" stroke-width="1.400"/></svg>
              </h3>
              <p class="desc">オンラインで PDF ファイルを Word ま<br />たは Excel に変換します</p>
              <div class="pick">PDF ファイルを選択</div>
              <div class="box f"><span>防災訓練マニ...ル 2 .pdf</span><svg width="18" height="18" viewBox="0 0 18 18"><path d="M2 2l14 14M16 2L2 16" stroke="#8a8a8a" stroke-width="3"/></svg></div>
              <div class="lbl">次に変換 :</div>
              <div class="box s"><span>Microsoft Word (*.docx)</span><svg width="16" height="12" viewBox="0 0 16 12"><path d="M1.500 2.500L8 9l6.500-6.500" fill="none" stroke="#8a8a8a" stroke-width="2.600"/></svg></div>
              <div class="lbl last">文書の言語 :</div>
            </div>
          </div>
          <div class="promo"><b>Acrobat Pro DCで<br />PDFを変換・編集</b><div class="cta">今すぐ無料でお試し</div></div>
        </div>
      </div>
      <div class="taskbar">
        <div class="weather">
          <svg width="36" height="36" viewBox="0 0 36 36"><path d="M15 2c-1 5 0 10 7 12-4 6-14 6-19 0 6 1 12-5 12-12z" fill="#f6b82a"/><path d="M10 31a5.500 5.500 0 0 1-3-10.500 8.500 8.500 0 0 1 16-3.500 7 7 0 0 1 5 3.500 5.500 5.500 0 0 1 1 10.500z" fill="#d6e2ee"/></svg>
          <div class="wtext"><b>28°C</b><br />晴れ時々くもり</div>
        </div>
        ${task.map((t, i) => html`<div class="tile ${i === 14 ? "on" : ""}">
          ${i === 14 ? html`<span class="plate"></span>` : nothing}
          <svg width="36" height="36" viewBox="0 0 36 36">${t}</svg>
          ${i === 5 || i === 11 || i === 13 ? html`<span class="dot"></span>` : nothing}
          ${i === 14 ? html`<span class="bar"></span>` : nothing}
        </div>`)}
        <div class="tray">
          <svg class="tr1" width="20" height="14" viewBox="0 0 20 14"><path d="M1 12l9-9 9 9" fill="none" stroke="#fff" stroke-width="1.400"/></svg>
          <svg class="tr2" width="26" height="24" viewBox="0 0 26 24"><path d="M6 22a5 5 0 0 1-1-10 8 8 0 0 1 15-2 6 6 0 0 1 0 12z" fill="#e4e4e4"/></svg>
          <svg class="tr3" width="26" height="30" viewBox="0 0 26 30"><path d="M4 14A10 10 0 0 1 20 4M3 18a10 10 0 0 0 7 8" fill="none" stroke="#e8e8e8" stroke-width="1.500"/><path d="M20 0v6h-6M1 22h6v5" fill="none" stroke="#e8e8e8" stroke-width="1.500"/><ellipse cx="18" cy="22" rx="6" ry="8" fill="#f39a0b"/></svg>
          <svg class="tr4" width="22" height="30" viewBox="0 0 22 30"><path d="M1 29L11 1l10 28M5 19h12" fill="none" stroke="#fff" stroke-width="1.300"/></svg>
          <svg class="tr5" width="26" height="24" viewBox="0 0 26 24"><g fill="none" stroke="#fff" stroke-width="2"><path d="M1 8a17 17 0 0 1 24 0M5 12.500a11 11 0 0 1 16 0M9 16.500a5.500 5.500 0 0 1 8 0"/></g><circle cx="13" cy="21" r="2" fill="#fff"/></svg>
          <svg class="tr6" width="24" height="24" viewBox="0 0 24 24"><path d="M2 8h5l7-6v20l-7-6H2z" fill="none" stroke="#eee" stroke-width="1.500"/><path d="M17 7a7 7 0 0 1 0 10M20 3a13 13 0 0 1 0 18" fill="none" stroke="#bbb" stroke-width="1.500"/></svg>
          <svg width="26" height="22" viewBox="0 0 26 22"><rect x="1" y="2" width="21" height="18" rx="4" fill="none" stroke="#fff" stroke-width="1.500"/><rect x="4" y="5" width="15" height="12" rx="2" fill="#fff"/><rect x="23" y="8" width="2" height="6" fill="#fff"/></svg>
          <div class="clock">22:07<br />2022/07/30</div>
          <div class="count">12</div>
        </div>
      </div>
    `;
  }
}
